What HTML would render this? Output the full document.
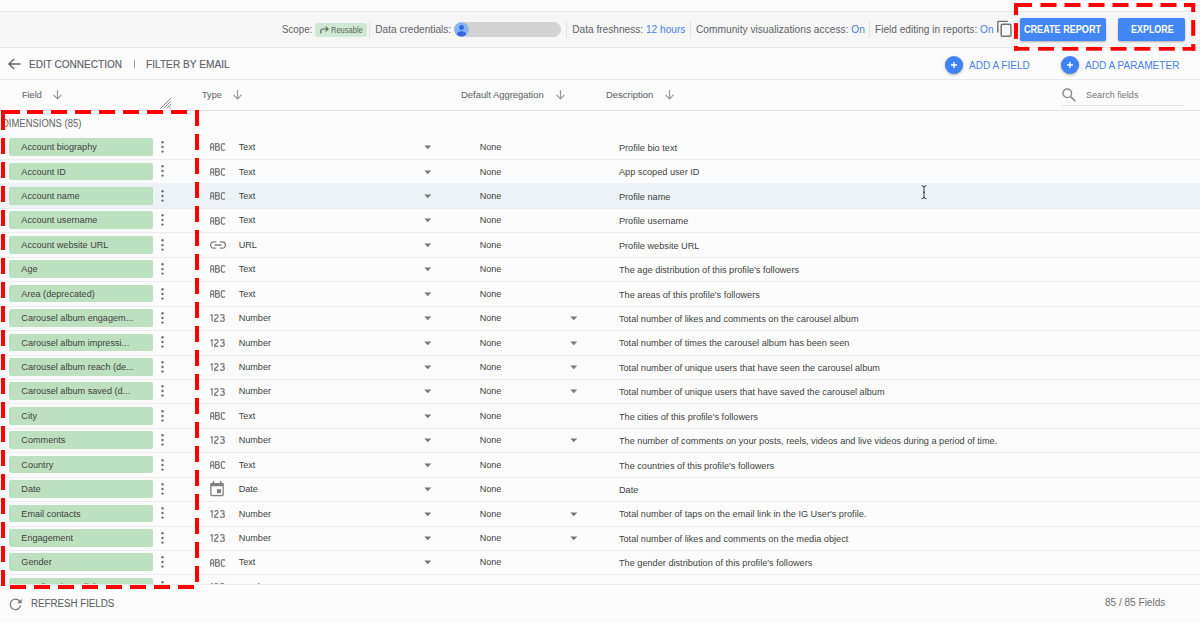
<!DOCTYPE html>
<html><head><meta charset="utf-8"><style>
*{box-sizing:border-box;margin:0;padding:0}
html,body{width:1200px;height:630px;overflow:hidden;background:#fbfbfb;font-family:"Liberation Sans",sans-serif;position:relative}
.abs{position:absolute}
.tx{position:absolute;white-space:nowrap;line-height:1em;transform-origin:0 0}
.hl{position:absolute;left:0;width:1200px;height:1px}
#tb{position:absolute;left:0;top:10.5px;width:1200px;height:37.5px;background:#f6f6f6;border-top:1px solid #e6e6e6;border-bottom:1px solid #e6e6e6}
.vd{position:absolute;top:20.6px;width:1px;height:17.5px;background:#e2e2e2}
.btn{position:absolute;top:18px;height:22.6px;background:#4285f4;border-radius:2px;box-shadow:0 1px 2px rgba(0,0,0,.3)}
.row{position:absolute;left:0;width:1200px;height:24.43px}
.row::after{content:"";position:absolute;left:0;top:24.5px;width:1200px;height:1px;background:#ececec}
.row.hov{background:#ecf2f5}
.chip{position:absolute;left:9.3px;top:3.5px;width:143.6px;height:17.7px;background:#bde0c0;border-radius:2px}
.rt{position:absolute;white-space:nowrap;line-height:1em;font-size:9.12px;color:#3f4341}
.keb{position:absolute;left:159.8px;top:5.4px;fill:#707070}
.keb i{display:block;width:2.3px;height:2.3px;border-radius:50%;background:#7c7c7c;margin-bottom:2.35px}
.ic{position:absolute;left:209.5px;top:8.6px;width:16px;height:8px;line-height:0}
.icc{position:absolute;left:210.2px;top:4.6px;width:14px;height:16px;line-height:0}
.dd{position:absolute;top:10.5px;fill:#767876}
.d1{left:424.3px}
.d2{left:569.5px}
.ha{position:absolute;top:90.2px;line-height:0}
</style></head><body>
<div class="abs" style="left:0;top:622.5px;width:1200px;height:8px;background:#fff"></div>
<div id="tb"></div>
<div class="abs" style="left:314.75px;top:23.1px;width:52.2px;height:13.8px;background:#cfe8d3;border-radius:3px"></div>
<svg class="abs" style="left:319.5px;top:26px" width="9" height="8" viewBox="0 0 9 8"><path d="M0.8 7.5V5Q0.8 3 2.8 3H8.2M5.6 0.6L8.2 3L5.6 5.4" fill="none" stroke="#5d655f" stroke-width="1.1"/></svg>
<div class="vd" style="left:368.9px"></div>
<div class="vd" style="left:565.8px"></div>
<div class="vd" style="left:689.8px"></div>
<div class="vd" style="left:868.8px"></div>
<div class="abs" style="left:454px;top:21.9px;width:107.3px;height:15.2px;background:#d3d3d3;border-radius:8px"></div>
<svg class="abs" style="left:453.8px;top:22.3px" width="15" height="15" viewBox="0 0 15 15"><circle cx="7.5" cy="7.5" r="7.3" fill="#8ab4f8"/><circle cx="7.5" cy="5.4" r="2.5" fill="#3367d6"/><path d="M2.9 12.3Q3.5 9.2 7.5 9.2Q11.5 9.2 12.1 12.3Q10.3 14.6 7.5 14.6Q4.7 14.6 2.9 12.3Z" fill="#3367d6"/></svg>
<svg class="abs" style="left:996px;top:19.9px" width="17" height="18" viewBox="0 0 17 18"><path d="M1.8 12.4V2.1Q1.8 1.4 2.5 1.4H11.9" fill="none" stroke="#6e716f" stroke-width="1.4"/><rect x="5.2" y="4.2" width="9.8" height="12" rx="1.3" fill="none" stroke="#6e716f" stroke-width="1.45"/></svg>
<div class="btn" style="left:1020.2px;width:85.7px"></div>
<div class="btn" style="left:1118.3px;width:66.8px"></div>
<div class="hl" style="top:79px;background:#e8e8e8"></div>
<svg class="abs" style="left:8px;top:58px" width="13" height="12" viewBox="0 0 13 12"><path d="M12.5 6H1.2M6 1L1 6L6 11" fill="none" stroke="#5f6368" stroke-width="1.4"/></svg>
<div class="abs" style="left:133.9px;top:60.3px;width:1.1px;height:8px;background:#9a9a9a"></div>
<div class="abs" style="left:944.9px;top:56.1px;width:18.3px;height:18.3px;border-radius:50%;background:#3f82f6;box-shadow:0 1px 2.5px rgba(0,0,0,.35)"></div>
<svg class="abs" style="left:950.0px;top:61.2px" width="8" height="8" viewBox="0 0 8 8"><path d="M4 1V7M1 4H7" stroke="#fff" stroke-width="1.35"/></svg>
<div class="abs" style="left:1060.9px;top:56.1px;width:18.3px;height:18.3px;border-radius:50%;background:#3f82f6;box-shadow:0 1px 2.5px rgba(0,0,0,.35)"></div>
<svg class="abs" style="left:1066.0px;top:61.2px" width="8" height="8" viewBox="0 0 8 8"><path d="M4 1V7M1 4H7" stroke="#fff" stroke-width="1.35"/></svg>
<div class="ha" style="left:53.2px"><svg width="10" height="10" viewBox="0 0 10 10"><path d="M4.5 0V8.6M0.6 4.9L4.5 8.8L8.4 4.9" fill="none" stroke="#9a9a9a" stroke-width="1.2"/></svg></div>
<div class="ha" style="left:233.2px"><svg width="10" height="10" viewBox="0 0 10 10"><path d="M4.5 0V8.6M0.6 4.9L4.5 8.8L8.4 4.9" fill="none" stroke="#9a9a9a" stroke-width="1.2"/></svg></div>
<div class="ha" style="left:556.0px"><svg width="10" height="10" viewBox="0 0 10 10"><path d="M4.5 0V8.6M0.6 4.9L4.5 8.8L8.4 4.9" fill="none" stroke="#9a9a9a" stroke-width="1.2"/></svg></div>
<div class="ha" style="left:665.3px"><svg width="10" height="10" viewBox="0 0 10 10"><path d="M4.5 0V8.6M0.6 4.9L4.5 8.8L8.4 4.9" fill="none" stroke="#9a9a9a" stroke-width="1.2"/></svg></div>
<svg class="abs" style="left:159.5px;top:97.5px" width="12" height="12" viewBox="0 0 12 12"><path d="M0.5 10.5L11 0M3.6 10.6L11 3.2M6.4 10.6L11 6" stroke="#808080" stroke-width="0.95" fill="none"/><circle cx="10" cy="9.8" r="0.7" fill="#808080"/></svg>
<svg class="abs" style="left:1062px;top:88.3px" width="14" height="14" viewBox="0 0 14 14"><circle cx="5.3" cy="5.3" r="4.3" fill="none" stroke="#8a8a8a" stroke-width="1.4"/><path d="M8.4 8.4L13.3 13.3" stroke="#8a8a8a" stroke-width="1.6"/></svg>
<div class="abs" style="left:1061.6px;top:105.4px;width:122.7px;height:1px;background:#e2e2e2"></div>
<div class="hl" style="top:110px;background:#e4e4e4"></div>
<div class="abs" style="left:0;top:110.5px;width:1200px;height:473.6px;overflow:hidden"><div class="abs" style="left:0;top:-110.5px;width:1200px;height:700px"><div class="row" style="top:134.63px"><div class="chip"></div><div class="rt cn" style="left:21.34px;top:8.55px;font-size:9.12px">Account biography</div><svg class="keb" width="5" height="14" viewBox="0 0 5 14"><circle cx="2.5" cy="2.3" r="1.2"/><circle cx="2.5" cy="6.95" r="1.2"/><circle cx="2.5" cy="11.6" r="1.2"/></svg><div class="ic"><svg width="16" height="8" viewBox="0 0 16 8"><path d="M0.7 7.6V2.2Q0.7 0.7 2.2 0.7Q3.7 0.7 3.7 2.2V7.6M0.7 4.4H3.7M5.6 7.3V0.7H7.6Q9.2 0.7 9.2 2.1Q9.2 3.6 7.6 3.6H5.6M7.6 3.6Q9.4 3.6 9.4 5.3Q9.4 7.3 7.6 7.3H5.6M14.9 1.6Q14.6 0.7 13.2 0.7Q11.3 0.7 11.3 2.4V5.6Q11.3 7.3 13.2 7.3Q14.6 7.3 14.9 6.4" fill="none" stroke="#7d7d7d" stroke-width="1.25"/></svg></div><div class="rt " style="left:238.64px;top:8.55px;font-size:9.12px">Text</div><svg class="dd d1" width="8" height="5" viewBox="0 0 8 5"><path d="M0.3 0.6H7.3L3.8 4.2Z"/></svg><div class="rt " style="left:479.64px;top:8.55px;font-size:9.12px">None</div><div class="rt ds" style="left:618.93px;top:9.30px;font-size:9.18px">Profile bio text</div></div><div class="row" style="top:159.06px"><div class="chip"></div><div class="rt cn" style="left:21.34px;top:8.55px;font-size:9.12px">Account ID</div><svg class="keb" width="5" height="14" viewBox="0 0 5 14"><circle cx="2.5" cy="2.3" r="1.2"/><circle cx="2.5" cy="6.95" r="1.2"/><circle cx="2.5" cy="11.6" r="1.2"/></svg><div class="ic"><svg width="16" height="8" viewBox="0 0 16 8"><path d="M0.7 7.6V2.2Q0.7 0.7 2.2 0.7Q3.7 0.7 3.7 2.2V7.6M0.7 4.4H3.7M5.6 7.3V0.7H7.6Q9.2 0.7 9.2 2.1Q9.2 3.6 7.6 3.6H5.6M7.6 3.6Q9.4 3.6 9.4 5.3Q9.4 7.3 7.6 7.3H5.6M14.9 1.6Q14.6 0.7 13.2 0.7Q11.3 0.7 11.3 2.4V5.6Q11.3 7.3 13.2 7.3Q14.6 7.3 14.9 6.4" fill="none" stroke="#7d7d7d" stroke-width="1.25"/></svg></div><div class="rt " style="left:238.64px;top:8.55px;font-size:9.12px">Text</div><svg class="dd d1" width="8" height="5" viewBox="0 0 8 5"><path d="M0.3 0.6H7.3L3.8 4.2Z"/></svg><div class="rt " style="left:479.64px;top:8.55px;font-size:9.12px">None</div><div class="rt ds" style="left:618.93px;top:9.30px;font-size:9.18px">App scoped user ID</div></div><div class="row hov" style="top:183.49px"><div class="chip"></div><div class="rt cn" style="left:21.34px;top:8.55px;font-size:9.12px">Account name</div><svg class="keb" width="5" height="14" viewBox="0 0 5 14"><circle cx="2.5" cy="2.3" r="1.2"/><circle cx="2.5" cy="6.95" r="1.2"/><circle cx="2.5" cy="11.6" r="1.2"/></svg><div class="ic"><svg width="16" height="8" viewBox="0 0 16 8"><path d="M0.7 7.6V2.2Q0.7 0.7 2.2 0.7Q3.7 0.7 3.7 2.2V7.6M0.7 4.4H3.7M5.6 7.3V0.7H7.6Q9.2 0.7 9.2 2.1Q9.2 3.6 7.6 3.6H5.6M7.6 3.6Q9.4 3.6 9.4 5.3Q9.4 7.3 7.6 7.3H5.6M14.9 1.6Q14.6 0.7 13.2 0.7Q11.3 0.7 11.3 2.4V5.6Q11.3 7.3 13.2 7.3Q14.6 7.3 14.9 6.4" fill="none" stroke="#7d7d7d" stroke-width="1.25"/></svg></div><div class="rt " style="left:238.64px;top:8.55px;font-size:9.12px">Text</div><svg class="dd d1" width="8" height="5" viewBox="0 0 8 5"><path d="M0.3 0.6H7.3L3.8 4.2Z"/></svg><div class="rt " style="left:479.64px;top:8.55px;font-size:9.12px">None</div><div class="rt ds" style="left:618.93px;top:9.30px;font-size:9.18px">Profile name</div></div><div class="row" style="top:207.92px"><div class="chip"></div><div class="rt cn" style="left:21.34px;top:8.55px;font-size:9.12px">Account username</div><svg class="keb" width="5" height="14" viewBox="0 0 5 14"><circle cx="2.5" cy="2.3" r="1.2"/><circle cx="2.5" cy="6.95" r="1.2"/><circle cx="2.5" cy="11.6" r="1.2"/></svg><div class="ic"><svg width="16" height="8" viewBox="0 0 16 8"><path d="M0.7 7.6V2.2Q0.7 0.7 2.2 0.7Q3.7 0.7 3.7 2.2V7.6M0.7 4.4H3.7M5.6 7.3V0.7H7.6Q9.2 0.7 9.2 2.1Q9.2 3.6 7.6 3.6H5.6M7.6 3.6Q9.4 3.6 9.4 5.3Q9.4 7.3 7.6 7.3H5.6M14.9 1.6Q14.6 0.7 13.2 0.7Q11.3 0.7 11.3 2.4V5.6Q11.3 7.3 13.2 7.3Q14.6 7.3 14.9 6.4" fill="none" stroke="#7d7d7d" stroke-width="1.25"/></svg></div><div class="rt " style="left:238.64px;top:8.55px;font-size:9.12px">Text</div><svg class="dd d1" width="8" height="5" viewBox="0 0 8 5"><path d="M0.3 0.6H7.3L3.8 4.2Z"/></svg><div class="rt " style="left:479.64px;top:8.55px;font-size:9.12px">None</div><div class="rt ds" style="left:618.93px;top:9.30px;font-size:9.18px">Profile username</div></div><div class="row" style="top:232.35px"><div class="chip"></div><div class="rt cn" style="left:21.34px;top:8.55px;font-size:9.12px">Account website URL</div><svg class="keb" width="5" height="14" viewBox="0 0 5 14"><circle cx="2.5" cy="2.3" r="1.2"/><circle cx="2.5" cy="6.95" r="1.2"/><circle cx="2.5" cy="11.6" r="1.2"/></svg><div class="ic"><svg width="16" height="8" viewBox="0 0 16 8"><path d="M6.3 0.8H3.6Q0.6 0.8 0.6 4Q0.6 7.2 3.6 7.2H6.3M9.7 0.8H12.4Q15.4 0.8 15.4 4Q15.4 7.2 12.4 7.2H9.7M4.6 4H11.4" fill="none" stroke="#808080" stroke-width="1.3"/></svg></div><div class="rt " style="left:238.64px;top:8.55px;font-size:9.12px">URL</div><svg class="dd d1" width="8" height="5" viewBox="0 0 8 5"><path d="M0.3 0.6H7.3L3.8 4.2Z"/></svg><div class="rt " style="left:479.64px;top:8.55px;font-size:9.12px">None</div><div class="rt ds" style="left:618.93px;top:9.30px;font-size:9.18px">Profile website URL</div></div><div class="row" style="top:256.78px"><div class="chip"></div><div class="rt cn" style="left:21.34px;top:8.55px;font-size:9.12px">Age</div><svg class="keb" width="5" height="14" viewBox="0 0 5 14"><circle cx="2.5" cy="2.3" r="1.2"/><circle cx="2.5" cy="6.95" r="1.2"/><circle cx="2.5" cy="11.6" r="1.2"/></svg><div class="ic"><svg width="16" height="8" viewBox="0 0 16 8"><path d="M0.7 7.6V2.2Q0.7 0.7 2.2 0.7Q3.7 0.7 3.7 2.2V7.6M0.7 4.4H3.7M5.6 7.3V0.7H7.6Q9.2 0.7 9.2 2.1Q9.2 3.6 7.6 3.6H5.6M7.6 3.6Q9.4 3.6 9.4 5.3Q9.4 7.3 7.6 7.3H5.6M14.9 1.6Q14.6 0.7 13.2 0.7Q11.3 0.7 11.3 2.4V5.6Q11.3 7.3 13.2 7.3Q14.6 7.3 14.9 6.4" fill="none" stroke="#7d7d7d" stroke-width="1.25"/></svg></div><div class="rt " style="left:238.64px;top:8.55px;font-size:9.12px">Text</div><svg class="dd d1" width="8" height="5" viewBox="0 0 8 5"><path d="M0.3 0.6H7.3L3.8 4.2Z"/></svg><div class="rt " style="left:479.64px;top:8.55px;font-size:9.12px">None</div><div class="rt ds" style="left:618.93px;top:9.30px;font-size:9.18px">The age distribution of this profile's followers</div></div><div class="row" style="top:281.21px"><div class="chip"></div><div class="rt cn" style="left:21.34px;top:8.55px;font-size:9.12px">Area (deprecated)</div><svg class="keb" width="5" height="14" viewBox="0 0 5 14"><circle cx="2.5" cy="2.3" r="1.2"/><circle cx="2.5" cy="6.95" r="1.2"/><circle cx="2.5" cy="11.6" r="1.2"/></svg><div class="ic"><svg width="16" height="8" viewBox="0 0 16 8"><path d="M0.7 7.6V2.2Q0.7 0.7 2.2 0.7Q3.7 0.7 3.7 2.2V7.6M0.7 4.4H3.7M5.6 7.3V0.7H7.6Q9.2 0.7 9.2 2.1Q9.2 3.6 7.6 3.6H5.6M7.6 3.6Q9.4 3.6 9.4 5.3Q9.4 7.3 7.6 7.3H5.6M14.9 1.6Q14.6 0.7 13.2 0.7Q11.3 0.7 11.3 2.4V5.6Q11.3 7.3 13.2 7.3Q14.6 7.3 14.9 6.4" fill="none" stroke="#7d7d7d" stroke-width="1.25"/></svg></div><div class="rt " style="left:238.64px;top:8.55px;font-size:9.12px">Text</div><svg class="dd d1" width="8" height="5" viewBox="0 0 8 5"><path d="M0.3 0.6H7.3L3.8 4.2Z"/></svg><div class="rt " style="left:479.64px;top:8.55px;font-size:9.12px">None</div><div class="rt ds" style="left:618.93px;top:9.30px;font-size:9.18px">The areas of this profile's followers</div></div><div class="row" style="top:305.64px"><div class="chip"></div><div class="rt cn" style="left:21.34px;top:8.55px;font-size:9.12px">Carousel album engagem...</div><svg class="keb" width="5" height="14" viewBox="0 0 5 14"><circle cx="2.5" cy="2.3" r="1.2"/><circle cx="2.5" cy="6.95" r="1.2"/><circle cx="2.5" cy="11.6" r="1.2"/></svg><div class="ic"><svg width="16" height="8" viewBox="0 0 16 8"><path d="M0.6 1.6L2.1 0.7V7.6M4.6 1.7Q5 0.7 6.4 0.7Q8.1 0.7 8.1 2.2Q8.1 3.2 6.9 4.1L4.7 5.9V7.3H8.3M10.3 1.5Q10.8 0.7 12.3 0.7Q14.1 0.7 14.1 2.1Q14.1 3.6 12.3 3.6H11.8M12.3 3.6Q14.3 3.6 14.3 5.4Q14.3 7.3 12.3 7.3Q10.7 7.3 10.2 6.4" fill="none" stroke="#7d7d7d" stroke-width="1.25"/></svg></div><div class="rt " style="left:238.64px;top:8.55px;font-size:9.12px">Number</div><svg class="dd d1" width="8" height="5" viewBox="0 0 8 5"><path d="M0.3 0.6H7.3L3.8 4.2Z"/></svg><div class="rt " style="left:479.64px;top:8.55px;font-size:9.12px">None</div><svg class="dd d2" width="8" height="5" viewBox="0 0 8 5"><path d="M0.3 0.6H7.3L3.8 4.2Z"/></svg><div class="rt ds" style="left:618.93px;top:9.30px;font-size:9.18px">Total number of likes and comments on the carousel album</div></div><div class="row" style="top:330.07px"><div class="chip"></div><div class="rt cn" style="left:21.34px;top:8.55px;font-size:9.12px">Carousel album impressi...</div><svg class="keb" width="5" height="14" viewBox="0 0 5 14"><circle cx="2.5" cy="2.3" r="1.2"/><circle cx="2.5" cy="6.95" r="1.2"/><circle cx="2.5" cy="11.6" r="1.2"/></svg><div class="ic"><svg width="16" height="8" viewBox="0 0 16 8"><path d="M0.6 1.6L2.1 0.7V7.6M4.6 1.7Q5 0.7 6.4 0.7Q8.1 0.7 8.1 2.2Q8.1 3.2 6.9 4.1L4.7 5.9V7.3H8.3M10.3 1.5Q10.8 0.7 12.3 0.7Q14.1 0.7 14.1 2.1Q14.1 3.6 12.3 3.6H11.8M12.3 3.6Q14.3 3.6 14.3 5.4Q14.3 7.3 12.3 7.3Q10.7 7.3 10.2 6.4" fill="none" stroke="#7d7d7d" stroke-width="1.25"/></svg></div><div class="rt " style="left:238.64px;top:8.55px;font-size:9.12px">Number</div><svg class="dd d1" width="8" height="5" viewBox="0 0 8 5"><path d="M0.3 0.6H7.3L3.8 4.2Z"/></svg><div class="rt " style="left:479.64px;top:8.55px;font-size:9.12px">None</div><svg class="dd d2" width="8" height="5" viewBox="0 0 8 5"><path d="M0.3 0.6H7.3L3.8 4.2Z"/></svg><div class="rt ds" style="left:618.93px;top:9.30px;font-size:9.18px">Total number of times the carousel album has been seen</div></div><div class="row" style="top:354.50px"><div class="chip"></div><div class="rt cn" style="left:21.34px;top:8.55px;font-size:9.12px">Carousel album reach (de...</div><svg class="keb" width="5" height="14" viewBox="0 0 5 14"><circle cx="2.5" cy="2.3" r="1.2"/><circle cx="2.5" cy="6.95" r="1.2"/><circle cx="2.5" cy="11.6" r="1.2"/></svg><div class="ic"><svg width="16" height="8" viewBox="0 0 16 8"><path d="M0.6 1.6L2.1 0.7V7.6M4.6 1.7Q5 0.7 6.4 0.7Q8.1 0.7 8.1 2.2Q8.1 3.2 6.9 4.1L4.7 5.9V7.3H8.3M10.3 1.5Q10.8 0.7 12.3 0.7Q14.1 0.7 14.1 2.1Q14.1 3.6 12.3 3.6H11.8M12.3 3.6Q14.3 3.6 14.3 5.4Q14.3 7.3 12.3 7.3Q10.7 7.3 10.2 6.4" fill="none" stroke="#7d7d7d" stroke-width="1.25"/></svg></div><div class="rt " style="left:238.64px;top:8.55px;font-size:9.12px">Number</div><svg class="dd d1" width="8" height="5" viewBox="0 0 8 5"><path d="M0.3 0.6H7.3L3.8 4.2Z"/></svg><div class="rt " style="left:479.64px;top:8.55px;font-size:9.12px">None</div><svg class="dd d2" width="8" height="5" viewBox="0 0 8 5"><path d="M0.3 0.6H7.3L3.8 4.2Z"/></svg><div class="rt ds" style="left:618.93px;top:9.30px;font-size:9.18px">Total number of unique users that have seen the carousel album</div></div><div class="row" style="top:378.93px"><div class="chip"></div><div class="rt cn" style="left:21.34px;top:8.55px;font-size:9.12px">Carousel album saved (d...</div><svg class="keb" width="5" height="14" viewBox="0 0 5 14"><circle cx="2.5" cy="2.3" r="1.2"/><circle cx="2.5" cy="6.95" r="1.2"/><circle cx="2.5" cy="11.6" r="1.2"/></svg><div class="ic"><svg width="16" height="8" viewBox="0 0 16 8"><path d="M0.6 1.6L2.1 0.7V7.6M4.6 1.7Q5 0.7 6.4 0.7Q8.1 0.7 8.1 2.2Q8.1 3.2 6.9 4.1L4.7 5.9V7.3H8.3M10.3 1.5Q10.8 0.7 12.3 0.7Q14.1 0.7 14.1 2.1Q14.1 3.6 12.3 3.6H11.8M12.3 3.6Q14.3 3.6 14.3 5.4Q14.3 7.3 12.3 7.3Q10.7 7.3 10.2 6.4" fill="none" stroke="#7d7d7d" stroke-width="1.25"/></svg></div><div class="rt " style="left:238.64px;top:8.55px;font-size:9.12px">Number</div><svg class="dd d1" width="8" height="5" viewBox="0 0 8 5"><path d="M0.3 0.6H7.3L3.8 4.2Z"/></svg><div class="rt " style="left:479.64px;top:8.55px;font-size:9.12px">None</div><svg class="dd d2" width="8" height="5" viewBox="0 0 8 5"><path d="M0.3 0.6H7.3L3.8 4.2Z"/></svg><div class="rt ds" style="left:618.93px;top:9.30px;font-size:9.18px">Total number of unique users that have saved the carousel album</div></div><div class="row" style="top:403.36px"><div class="chip"></div><div class="rt cn" style="left:21.34px;top:8.55px;font-size:9.12px">City</div><svg class="keb" width="5" height="14" viewBox="0 0 5 14"><circle cx="2.5" cy="2.3" r="1.2"/><circle cx="2.5" cy="6.95" r="1.2"/><circle cx="2.5" cy="11.6" r="1.2"/></svg><div class="ic"><svg width="16" height="8" viewBox="0 0 16 8"><path d="M0.7 7.6V2.2Q0.7 0.7 2.2 0.7Q3.7 0.7 3.7 2.2V7.6M0.7 4.4H3.7M5.6 7.3V0.7H7.6Q9.2 0.7 9.2 2.1Q9.2 3.6 7.6 3.6H5.6M7.6 3.6Q9.4 3.6 9.4 5.3Q9.4 7.3 7.6 7.3H5.6M14.9 1.6Q14.6 0.7 13.2 0.7Q11.3 0.7 11.3 2.4V5.6Q11.3 7.3 13.2 7.3Q14.6 7.3 14.9 6.4" fill="none" stroke="#7d7d7d" stroke-width="1.25"/></svg></div><div class="rt " style="left:238.64px;top:8.55px;font-size:9.12px">Text</div><svg class="dd d1" width="8" height="5" viewBox="0 0 8 5"><path d="M0.3 0.6H7.3L3.8 4.2Z"/></svg><div class="rt " style="left:479.64px;top:8.55px;font-size:9.12px">None</div><div class="rt ds" style="left:618.93px;top:9.30px;font-size:9.18px">The cities of this profile's followers</div></div><div class="row" style="top:427.79px"><div class="chip"></div><div class="rt cn" style="left:21.34px;top:8.55px;font-size:9.12px">Comments</div><svg class="keb" width="5" height="14" viewBox="0 0 5 14"><circle cx="2.5" cy="2.3" r="1.2"/><circle cx="2.5" cy="6.95" r="1.2"/><circle cx="2.5" cy="11.6" r="1.2"/></svg><div class="ic"><svg width="16" height="8" viewBox="0 0 16 8"><path d="M0.6 1.6L2.1 0.7V7.6M4.6 1.7Q5 0.7 6.4 0.7Q8.1 0.7 8.1 2.2Q8.1 3.2 6.9 4.1L4.7 5.9V7.3H8.3M10.3 1.5Q10.8 0.7 12.3 0.7Q14.1 0.7 14.1 2.1Q14.1 3.6 12.3 3.6H11.8M12.3 3.6Q14.3 3.6 14.3 5.4Q14.3 7.3 12.3 7.3Q10.7 7.3 10.2 6.4" fill="none" stroke="#7d7d7d" stroke-width="1.25"/></svg></div><div class="rt " style="left:238.64px;top:8.55px;font-size:9.12px">Number</div><svg class="dd d1" width="8" height="5" viewBox="0 0 8 5"><path d="M0.3 0.6H7.3L3.8 4.2Z"/></svg><div class="rt " style="left:479.64px;top:8.55px;font-size:9.12px">None</div><svg class="dd d2" width="8" height="5" viewBox="0 0 8 5"><path d="M0.3 0.6H7.3L3.8 4.2Z"/></svg><div class="rt ds" style="left:618.93px;top:9.30px;font-size:9.18px">The number of comments on your posts, reels, videos and live videos during a period of time.</div></div><div class="row" style="top:452.22px"><div class="chip"></div><div class="rt cn" style="left:21.34px;top:8.55px;font-size:9.12px">Country</div><svg class="keb" width="5" height="14" viewBox="0 0 5 14"><circle cx="2.5" cy="2.3" r="1.2"/><circle cx="2.5" cy="6.95" r="1.2"/><circle cx="2.5" cy="11.6" r="1.2"/></svg><div class="ic"><svg width="16" height="8" viewBox="0 0 16 8"><path d="M0.7 7.6V2.2Q0.7 0.7 2.2 0.7Q3.7 0.7 3.7 2.2V7.6M0.7 4.4H3.7M5.6 7.3V0.7H7.6Q9.2 0.7 9.2 2.1Q9.2 3.6 7.6 3.6H5.6M7.6 3.6Q9.4 3.6 9.4 5.3Q9.4 7.3 7.6 7.3H5.6M14.9 1.6Q14.6 0.7 13.2 0.7Q11.3 0.7 11.3 2.4V5.6Q11.3 7.3 13.2 7.3Q14.6 7.3 14.9 6.4" fill="none" stroke="#7d7d7d" stroke-width="1.25"/></svg></div><div class="rt " style="left:238.64px;top:8.55px;font-size:9.12px">Text</div><svg class="dd d1" width="8" height="5" viewBox="0 0 8 5"><path d="M0.3 0.6H7.3L3.8 4.2Z"/></svg><div class="rt " style="left:479.64px;top:8.55px;font-size:9.12px">None</div><div class="rt ds" style="left:618.93px;top:9.30px;font-size:9.18px">The countries of this profile's followers</div></div><div class="row" style="top:476.65px"><div class="chip"></div><div class="rt cn" style="left:21.34px;top:8.55px;font-size:9.12px">Date</div><svg class="keb" width="5" height="14" viewBox="0 0 5 14"><circle cx="2.5" cy="2.3" r="1.2"/><circle cx="2.5" cy="6.95" r="1.2"/><circle cx="2.5" cy="11.6" r="1.2"/></svg><div class="icc"><svg width="14" height="16" viewBox="0 0 14 16"><path d="M1.4 2H12.6Q13.8 2 13.8 3.2V13.8Q13.8 15.2 12.4 15.2H1.6Q0.2 15.2 0.2 13.8V3.2Q0.2 2 1.4 2Z" fill="#808080"/><rect x="1.5" y="5.2" width="11" height="8.7" fill="#fbfbfb"/><rect x="7" y="8.2" width="4" height="3.9" fill="#808080"/><rect x="2.7" y="0" width="1.5" height="2.5" fill="#808080"/><rect x="9.9" y="0" width="1.5" height="2.5" fill="#808080"/></svg></div><div class="rt " style="left:238.64px;top:8.55px;font-size:9.12px">Date</div><svg class="dd d1" width="8" height="5" viewBox="0 0 8 5"><path d="M0.3 0.6H7.3L3.8 4.2Z"/></svg><div class="rt " style="left:479.64px;top:8.55px;font-size:9.12px">None</div><div class="rt ds" style="left:618.93px;top:9.30px;font-size:9.18px">Date</div></div><div class="row" style="top:501.08px"><div class="chip"></div><div class="rt cn" style="left:21.34px;top:8.55px;font-size:9.12px">Email contacts</div><svg class="keb" width="5" height="14" viewBox="0 0 5 14"><circle cx="2.5" cy="2.3" r="1.2"/><circle cx="2.5" cy="6.95" r="1.2"/><circle cx="2.5" cy="11.6" r="1.2"/></svg><div class="ic"><svg width="16" height="8" viewBox="0 0 16 8"><path d="M0.6 1.6L2.1 0.7V7.6M4.6 1.7Q5 0.7 6.4 0.7Q8.1 0.7 8.1 2.2Q8.1 3.2 6.9 4.1L4.7 5.9V7.3H8.3M10.3 1.5Q10.8 0.7 12.3 0.7Q14.1 0.7 14.1 2.1Q14.1 3.6 12.3 3.6H11.8M12.3 3.6Q14.3 3.6 14.3 5.4Q14.3 7.3 12.3 7.3Q10.7 7.3 10.2 6.4" fill="none" stroke="#7d7d7d" stroke-width="1.25"/></svg></div><div class="rt " style="left:238.64px;top:8.55px;font-size:9.12px">Number</div><svg class="dd d1" width="8" height="5" viewBox="0 0 8 5"><path d="M0.3 0.6H7.3L3.8 4.2Z"/></svg><div class="rt " style="left:479.64px;top:8.55px;font-size:9.12px">None</div><svg class="dd d2" width="8" height="5" viewBox="0 0 8 5"><path d="M0.3 0.6H7.3L3.8 4.2Z"/></svg><div class="rt ds" style="left:618.93px;top:9.30px;font-size:9.18px">Total number of taps on the email link in the IG User's profile.</div></div><div class="row" style="top:525.51px"><div class="chip"></div><div class="rt cn" style="left:21.34px;top:8.55px;font-size:9.12px">Engagement</div><svg class="keb" width="5" height="14" viewBox="0 0 5 14"><circle cx="2.5" cy="2.3" r="1.2"/><circle cx="2.5" cy="6.95" r="1.2"/><circle cx="2.5" cy="11.6" r="1.2"/></svg><div class="ic"><svg width="16" height="8" viewBox="0 0 16 8"><path d="M0.6 1.6L2.1 0.7V7.6M4.6 1.7Q5 0.7 6.4 0.7Q8.1 0.7 8.1 2.2Q8.1 3.2 6.9 4.1L4.7 5.9V7.3H8.3M10.3 1.5Q10.8 0.7 12.3 0.7Q14.1 0.7 14.1 2.1Q14.1 3.6 12.3 3.6H11.8M12.3 3.6Q14.3 3.6 14.3 5.4Q14.3 7.3 12.3 7.3Q10.7 7.3 10.2 6.4" fill="none" stroke="#7d7d7d" stroke-width="1.25"/></svg></div><div class="rt " style="left:238.64px;top:8.55px;font-size:9.12px">Number</div><svg class="dd d1" width="8" height="5" viewBox="0 0 8 5"><path d="M0.3 0.6H7.3L3.8 4.2Z"/></svg><div class="rt " style="left:479.64px;top:8.55px;font-size:9.12px">None</div><svg class="dd d2" width="8" height="5" viewBox="0 0 8 5"><path d="M0.3 0.6H7.3L3.8 4.2Z"/></svg><div class="rt ds" style="left:618.93px;top:9.30px;font-size:9.18px">Total number of likes and comments on the media object</div></div><div class="row" style="top:549.94px"><div class="chip"></div><div class="rt cn" style="left:21.34px;top:8.55px;font-size:9.12px">Gender</div><svg class="keb" width="5" height="14" viewBox="0 0 5 14"><circle cx="2.5" cy="2.3" r="1.2"/><circle cx="2.5" cy="6.95" r="1.2"/><circle cx="2.5" cy="11.6" r="1.2"/></svg><div class="ic"><svg width="16" height="8" viewBox="0 0 16 8"><path d="M0.7 7.6V2.2Q0.7 0.7 2.2 0.7Q3.7 0.7 3.7 2.2V7.6M0.7 4.4H3.7M5.6 7.3V0.7H7.6Q9.2 0.7 9.2 2.1Q9.2 3.6 7.6 3.6H5.6M7.6 3.6Q9.4 3.6 9.4 5.3Q9.4 7.3 7.6 7.3H5.6M14.9 1.6Q14.6 0.7 13.2 0.7Q11.3 0.7 11.3 2.4V5.6Q11.3 7.3 13.2 7.3Q14.6 7.3 14.9 6.4" fill="none" stroke="#7d7d7d" stroke-width="1.25"/></svg></div><div class="rt " style="left:238.64px;top:8.55px;font-size:9.12px">Text</div><svg class="dd d1" width="8" height="5" viewBox="0 0 8 5"><path d="M0.3 0.6H7.3L3.8 4.2Z"/></svg><div class="rt " style="left:479.64px;top:8.55px;font-size:9.12px">None</div><div class="rt ds" style="left:618.93px;top:9.30px;font-size:9.18px">The gender distribution of this profile's followers</div></div><div class="row" style="top:574.37px"><div class="chip"></div><div class="rt cn" style="left:21.34px;top:8.55px;font-size:9.12px">Get directions clicks</div><svg class="keb" width="5" height="14" viewBox="0 0 5 14"><circle cx="2.5" cy="2.3" r="1.2"/><circle cx="2.5" cy="6.95" r="1.2"/><circle cx="2.5" cy="11.6" r="1.2"/></svg><div class="ic"><svg width="16" height="8" viewBox="0 0 16 8"><path d="M0.6 1.6L2.1 0.7V7.6M4.6 1.7Q5 0.7 6.4 0.7Q8.1 0.7 8.1 2.2Q8.1 3.2 6.9 4.1L4.7 5.9V7.3H8.3M10.3 1.5Q10.8 0.7 12.3 0.7Q14.1 0.7 14.1 2.1Q14.1 3.6 12.3 3.6H11.8M12.3 3.6Q14.3 3.6 14.3 5.4Q14.3 7.3 12.3 7.3Q10.7 7.3 10.2 6.4" fill="none" stroke="#7d7d7d" stroke-width="1.25"/></svg></div><div class="rt " style="left:238.64px;top:8.55px;font-size:9.12px">Number</div><svg class="dd d1" width="8" height="5" viewBox="0 0 8 5"><path d="M0.3 0.6H7.3L3.8 4.2Z"/></svg><div class="rt " style="left:479.64px;top:8.55px;font-size:9.12px">None</div><svg class="dd d2" width="8" height="5" viewBox="0 0 8 5"><path d="M0.3 0.6H7.3L3.8 4.2Z"/></svg><div class="rt ds" style="left:618.93px;top:9.30px;font-size:9.18px">Total number of taps on the directions link in the IG User's profile.</div></div></div></div>
<div class="hl" style="top:583.6px;background:#ebebeb"></div>
<svg class="abs" style="left:9px;top:597.5px" width="13" height="13" viewBox="0 0 13 13"><path d="M10.9 3.6A5.2 5.2 0 1 0 11.6 7.4" fill="none" stroke="#7a7a7a" stroke-width="1.3"/><path d="M12.6 0.8V5.2H8.2Z" fill="#7a7a7a"/></svg>
<div class="tx" style="left:281.69px;top:25.02px;font-size:10.14px;transform:scaleX(0.96);color:#5f6368">Scope:</div>
<div class="tx" style="left:330.56px;top:26.45px;font-size:8.57px;transform:scaleX(0.879);color:#5d655f">Reusable</div>
<div class="tx" style="left:375.19px;top:25.02px;font-size:10.14px;transform:scaleX(1.0);color:#5f6368">Data credentials:</div>
<div class="tx" style="left:572.19px;top:25.02px;font-size:10.14px;transform:scaleX(1.0);color:#5f6368">Data freshness: <span style="color:#4a7fe0">12 hours</span></div>
<div class="tx" style="left:695.59px;top:25.02px;font-size:10.14px;transform:scaleX(1.007);color:#5f6368">Community visualizations access: <span style="color:#4a7fe0">On</span></div>
<div class="tx" style="left:875.19px;top:25.02px;font-size:10.14px;transform:scaleX(0.998);color:#5f6368">Field editing in reports: <span style="color:#4a7fe0">On</span></div>
<div class="tx" style="left:1024.30px;top:25.23px;font-size:10.0px;transform:scaleX(0.908);color:#fff;font-weight:bold">CREATE REPORT</div>
<div class="tx" style="left:1130.50px;top:25.23px;font-size:10.0px;transform:scaleX(0.894);color:#fff;font-weight:bold">EXPLORE</div>
<div class="tx" style="left:29.39px;top:59.52px;font-size:10.14px;transform:scaleX(0.993);color:#5f6368;-webkit-text-stroke:0.15px #5f6368">EDIT CONNECTION</div>
<div class="tx" style="left:146.49px;top:59.52px;font-size:10.14px;transform:scaleX(1.003);color:#5f6368;-webkit-text-stroke:0.15px #5f6368">FILTER BY EMAIL</div>
<div class="tx" style="left:968.90px;top:60.63px;font-size:10.0px;transform:scaleX(1.004);color:#4a7fe0">ADD A FIELD</div>
<div class="tx" style="left:1084.90px;top:60.63px;font-size:10.0px;transform:scaleX(1.008);color:#4a7fe0">ADD A PARAMETER</div>
<div class="tx" style="left:21.61px;top:90.48px;font-size:9.71px;transform:scaleX(0.942);color:#666a6c;-webkit-text-stroke:0.08px #666a6c">Field</div>
<div class="tx" style="left:202.31px;top:90.48px;font-size:9.71px;transform:scaleX(0.942);color:#666a6c;-webkit-text-stroke:0.08px #666a6c">Type</div>
<div class="tx" style="left:461.31px;top:90.48px;font-size:9.71px;transform:scaleX(0.97);color:#666a6c;-webkit-text-stroke:0.08px #666a6c">Default Aggregation</div>
<div class="tx" style="left:606.41px;top:90.48px;font-size:9.71px;transform:scaleX(0.976);color:#666a6c;-webkit-text-stroke:0.08px #666a6c">Description</div>
<div class="tx" style="left:1086.01px;top:89.68px;font-size:9.71px;transform:scaleX(0.935);color:#777">Search fields</div>
<div class="tx" style="left:1.60px;top:118.58px;font-size:10.0px;transform:scaleX(0.946);color:#636363">DIMENSIONS (85)</div>
<div class="tx" style="left:31.10px;top:599.33px;font-size:10.0px;transform:scaleX(0.973);color:#5f6368;-webkit-text-stroke:0.12px #5f6368">REFRESH FIELDS</div>
<div class="tx" style="left:1105.40px;top:597.93px;font-size:10.0px;transform:scaleX(1.004);color:#6f6f6f">85 / 85 Fields</div>
<svg class="abs" style="left:920.5px;top:184.8px" width="6" height="15" viewBox="0 0 6 15"><path d="M0.6 0.7Q3 0.7 3 2.4V12Q3 13.7 0.6 13.7M5.4 0.7Q3 0.7 3 2.4M3 12Q3 13.7 5.4 13.7M2 7.2H4" fill="none" stroke="#fff" stroke-width="1.6" opacity="0.85"/><path d="M0.6 0.7Q3 0.7 3 2.4V12Q3 13.7 0.6 13.7M5.4 0.7Q3 0.7 3 2.4M3 12Q3 13.7 5.4 13.7M2 7.2H4" fill="none" stroke="#111" stroke-width="0.85"/></svg>
<svg class="abs" style="left:0;top:0" width="1200" height="630" fill="#ff0000"><rect x="1" y="110" width="19" height="4"/><rect x="27" y="110" width="16" height="4"/><rect x="51" y="110" width="16" height="4"/><rect x="75" y="110" width="16" height="4"/><rect x="99" y="110" width="16" height="4"/><rect x="123" y="110" width="16" height="4"/><rect x="147" y="110" width="16" height="4"/><rect x="171" y="110" width="16" height="4"/><rect x="195" y="110" width="4" height="16"/><rect x="195" y="134" width="4" height="16"/><rect x="195" y="158" width="4" height="16"/><rect x="195" y="182" width="4" height="16"/><rect x="195" y="206" width="4" height="16"/><rect x="195" y="230" width="4" height="16"/><rect x="195" y="254" width="4" height="16"/><rect x="195" y="278" width="4" height="16"/><rect x="195" y="302" width="4" height="16"/><rect x="195" y="326" width="4" height="16"/><rect x="195" y="350" width="4" height="16"/><rect x="195" y="374" width="4" height="16"/><rect x="195" y="398" width="4" height="16"/><rect x="195" y="422" width="4" height="16"/><rect x="195" y="446" width="4" height="16"/><rect x="195" y="470" width="4" height="16"/><rect x="195" y="494" width="4" height="16"/><rect x="195" y="518" width="4" height="16"/><rect x="195" y="542" width="4" height="16"/><rect x="195" y="566" width="4" height="16"/><rect x="1" y="110" width="4" height="20"/><rect x="1" y="138" width="4" height="16"/><rect x="1" y="162" width="4" height="16"/><rect x="1" y="186" width="4" height="16"/><rect x="1" y="210" width="4" height="16"/><rect x="1" y="234" width="4" height="16"/><rect x="1" y="258" width="4" height="16"/><rect x="1" y="282" width="4" height="16"/><rect x="1" y="306" width="4" height="16"/><rect x="1" y="330" width="4" height="16"/><rect x="1" y="354" width="4" height="16"/><rect x="1" y="378" width="4" height="16"/><rect x="1" y="402" width="4" height="16"/><rect x="1" y="426" width="4" height="16"/><rect x="1" y="450" width="4" height="16"/><rect x="1" y="474" width="4" height="16"/><rect x="1" y="498" width="4" height="16"/><rect x="1" y="522" width="4" height="16"/><rect x="1" y="546" width="4" height="16"/><rect x="1" y="570" width="4" height="16"/><rect x="1" y="594" width="4" height="-5"/><rect x="10" y="585" width="16" height="4"/><rect x="34" y="585" width="16" height="4"/><rect x="58" y="585" width="16" height="4"/><rect x="82" y="585" width="16" height="4"/><rect x="106" y="585" width="16" height="4"/><rect x="130" y="585" width="16" height="4"/><rect x="154" y="585" width="16" height="4"/><rect x="178" y="585" width="16" height="4"/><rect x="1014" y="3" width="18" height="4"/><rect x="1040.5" y="3" width="16" height="4"/><rect x="1064.5" y="3" width="16" height="4"/><rect x="1088.5" y="3" width="16" height="4"/><rect x="1112.5" y="3" width="16" height="4"/><rect x="1136.5" y="3" width="16" height="4"/><rect x="1160.5" y="3" width="16" height="4"/><rect x="1184" y="3" width="11.2" height="4"/><rect x="1014" y="47" width="15.5" height="3.7"/><rect x="1038" y="47" width="16" height="3.7"/><rect x="1062.3" y="47" width="16" height="3.7"/><rect x="1086" y="47" width="16" height="3.7"/><rect x="1110.5" y="47" width="16" height="3.7"/><rect x="1134.3" y="47" width="16" height="3.7"/><rect x="1158.8" y="47" width="16" height="3.7"/><rect x="1182.5" y="47" width="12.7" height="3.7"/><rect x="1014" y="3" width="4" height="12"/><rect x="1014" y="23.1" width="4" height="15.8"/><rect x="1014" y="46" width="4" height="4.7"/><rect x="1191.2" y="3" width="4" height="9"/><rect x="1191.2" y="20.1" width="4" height="15.7"/><rect x="1191.2" y="44.1" width="4" height="6.6"/></svg>
</body></html>
